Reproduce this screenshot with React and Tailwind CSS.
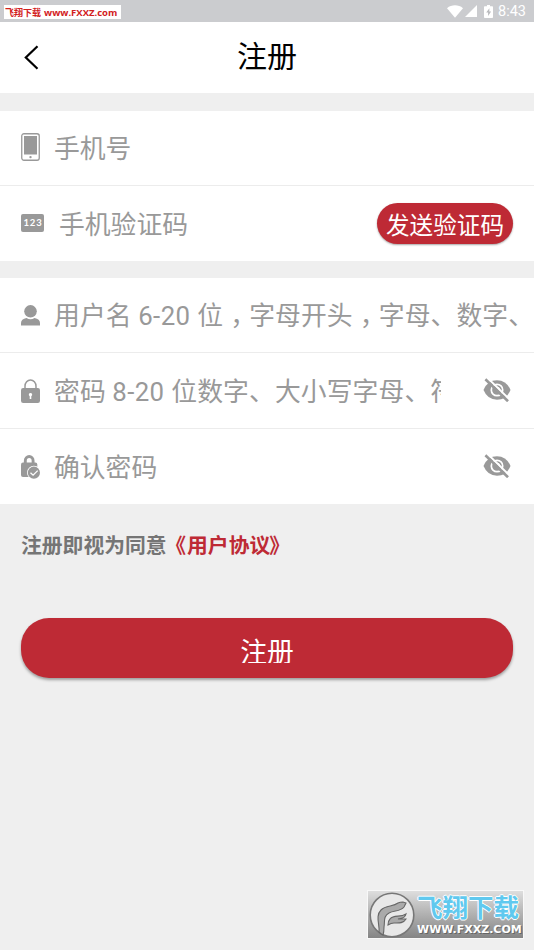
import React from "react";

function StatusBar() {
  return (
    <div className="flex h-[22px] items-start justify-between bg-[#cbcccf]">
      <div className="ml-1 mt-[5px] flex h-[14px] w-[117px] items-center gap-[3px] whitespace-nowrap bg-white pl-px font-bold text-[#d2201d]">
        <span className="pt-px text-[9px] leading-[14px]">飞翔下载</span>
        <span className="pt-px font-['Open_Sans'] text-[9.5px] leading-[14px]">www.FXXZ.com</span>
      </div>
      <div className="flex h-[22px] items-center pr-2 text-white">
        <svg className="h-[13px] w-[16px]" viewBox="0 0 16 13" fill="currentColor">
          <path d="M0 3.2C4.5-.6 11.5-.6 16 3.2L8 12.8z" />
        </svg>
        <svg className="ml-[2px] h-[12px] w-[12px]" viewBox="0 0 12 12" fill="currentColor">
          <path d="M12 0v12H0z" />
        </svg>
        <svg className="ml-[7px] h-[13px] w-[9px]" viewBox="0 0 9 13">
          <path d="M3 0h3v1.3h2.2q.8 0 .8.8v10q0 .9-.8.9H.8Q0 13 0 12.100V2.100q0-.8.8-.8H3z" fill="#fff" />
          <path d="M5.400 3.200 2.200 7.600h1.900v3.300l3-4.500H5.300z" fill="#b9babd" />
        </svg>
        <span className="ml-[5px] pt-[2px] font-[Roboto] text-[14.500px] leading-[20px] text-white">8:43</span>
      </div>
    </div>
  );
}

function PhoneIcon() {
  return (
    <svg className="-mt-[2px] h-[28px] w-[19px]" viewBox="0 0 19 28">
      <rect x=".75" y=".75" width="17.500" height="26.500" rx="2.200" fill="#fff" stroke="#999" strokeWidth="1.300" />
      <rect x="3" y="3" width="13" height="18.500" fill="#999" />
      <circle cx="9.500" cy="24.100" r="1.200" fill="#999" />
    </svg>
  );
}

function CodeIcon() {
  return (
    <span className="-mt-px flex h-[18px] w-[23px] items-center justify-center rounded-[2px] bg-[#999] pl-px font-[Lato] text-[9.500px] font-bold tracking-[0.900px] text-white">
      123
    </span>
  );
}

function UserIcon() {
  return (
    <svg className="h-[21px] w-[19px]" viewBox="0 0 19 21" fill="#999">
      <ellipse cx="9.500" cy="6.300" rx="6.300" ry="6.200" />
      <path d="M0 20.500v-2.500Q0 14 5.500 13q4 2.600 8 0Q19 14 19 18v2.500z" />
    </svg>
  );
}

function LockIcon() {
  return (
    <svg className="h-[24px] w-[19px]" viewBox="0 0 19 24">
      <path d="M4 10V7.200a5.500 6.300 0 0 1 11 0V10" fill="none" stroke="#999" strokeWidth="1.500" />
      <rect x="0" y="9" width="19" height="15" rx="2.200" fill="#999" />
      <path d="M9.500 14a1.700 1.700 0 0 1 .8 3.200V20H8.700v-2.800A1.700 1.700 0 0 1 9.500 14" fill="#fff" />
    </svg>
  );
}

function LockCheckIcon() {
  return (
    <svg className="h-[24px] w-[19px]" viewBox="0 0 19 24">
      <path d="M4.300 11V5.700a3.900 4.200 0 0 1 7.800 0V11" fill="none" stroke="#999" strokeWidth="2.900" />
      <rect x="0" y="7.500" width="16.300" height="14.500" rx="2" fill="#999" />
      <circle cx="12.900" cy="17.700" r="6.900" fill="#fff" />
      <circle cx="12.900" cy="17.700" r="6.100" fill="#999" />
      <path d="m9.500 17.700 2.600 2.500 4.600-4.600" fill="none" stroke="#fff" strokeWidth="1.300" />
    </svg>
  );
}

function EyeOffIcon() {
  return (
    <svg className="mb-px mr-[23px] h-[24px] w-[28px] shrink-0" viewBox="0 0 28 24">
      <path d="M.5 12Q4.500 2.300 14 2.300T27.500 12Q23.500 21.700 14 21.700T.5 12" fill="#999" />
      <circle cx="14" cy="12" r="5.700" fill="none" stroke="#fff" strokeWidth="1.700" />
      <path d="M14 9.300q2.700.2 2.700 3" fill="none" stroke="#fff" strokeWidth="1.100" />
      <path d="M4.600 0 27.300 22.300" stroke="#fff" strokeWidth="2" />
      <path d="M2.400 1.300 25 23.300" stroke="#999" strokeWidth="2.600" />
    </svg>
  );
}

function Comma() {
  return <span className="inline-block w-[26px] pl-[7px] [font-feature-settings:'halt']">，</span>;
}

function Row({ icon, children, trailing, className = "", textClass = "ml-[14px]" }) {
  return (
    <div className={`flex items-center bg-white pl-[21px] ${className}`}>
      <span className="flex shrink-0 items-center">{icon}</span>
      <div className={`overflow-hidden whitespace-nowrap pt-[2px] text-[25.800px] leading-[38px] text-[#999] ${textClass}`}>
        {children}
      </div>
      {trailing && <div className="ml-auto flex items-center">{trailing}</div>}
    </div>
  );
}

function Watermark() {
  return (
    <div className="mb-[11px] ml-auto mr-[10px] mt-auto flex h-[49px] w-[157px] items-center border border-[#f8f8f8] bg-linear-to-b from-[#dedede] to-[#858585]">
      <svg className="ml-[1px] h-[46px] w-[46px] shrink-0" viewBox="0 0 46 46">
        <circle cx="23" cy="23" r="21.800" fill="#e8e8e8" stroke="#777" strokeWidth="1.600" />
        <path d="M10 40C11 33 6 24 12 18c5-5 12-3 17-7 2-1 3-1 5-1l3 1-2 4c-4 5-10 3-15 6-6 3-4 9-5 14q0 5-1 8-2-1-4-3z" fill="#aaa" stroke="#666" strokeWidth="1.100" />
        <path d="M21 27c4-5 10-1 16-5-1 5-5 4-8 5l8 0c-3 5-8 4-12 4q-3 0-6 2 0-4 2-6z" fill="#aaa" stroke="#666" strokeWidth="1.100" />
      </svg>
      <div className="ml-[2px] flex flex-col whitespace-nowrap font-bold">
        <span className="text-[25.5px] leading-[30px] text-[#60c9ef] [text-shadow:1px_0_#fff,-1px_0_#fff,0_1px_#fff,0_-1px_#fff]">飞翔下载</span>
        <span className="font-['DejaVu_Sans'] text-[11px] leading-[13px] text-white [text-shadow:1px_1px_#666]">WWW.FXXZ.COM</span>
      </div>
    </div>
  );
}

export default function App() {
  return (
    <div className="flex h-[950px] w-[534px] flex-col overflow-hidden bg-[#efefef] font-[Roboto,'Noto_Sans_CJK_SC',sans-serif]">
      <StatusBar />
      <header className="grid h-[71px] grid-cols-[1fr_auto_1fr] items-center bg-white">
        <svg className="ml-[24px] h-[25px] w-[15px]" viewBox="0 0 15 25" fill="none" stroke="#000" strokeWidth="2.200">
          <path d="M13.500 1.200 1.800 12.500l11.700 11.300" />
        </svg>
        <h1 className="pb-[2px] text-[30px] leading-[40px] text-black">注册</h1>
      </header>

      <section className="mt-[18px]">
        <Row className="h-[75px] border-b border-[#ececec]" icon={<PhoneIcon />}>手机号</Row>
        <Row
          className="h-[75px]"
          icon={<CodeIcon />}
          textClass="ml-[15px]"
          trailing={
            <button className="mr-[21px] h-[41px] w-[136px] whitespace-nowrap rounded-full bg-[#be2a35] pt-[5px] text-[23.600px] leading-[36px] text-white shadow-[0_1px_2px_rgba(0,0,0,0.35)]">
              发送验证码
            </button>
          }
        >
          手机验证码
        </Row>
      </section>

      <section className="mt-[17px]">
        <Row className="h-[75px] border-b border-[#ececec]" icon={<UserIcon />} textClass="ml-[14px] w-[485px] tracking-[0.1px]">
          用户名 <span className="tracking-[0.4px]">6-20 </span>位<Comma />字母开头<Comma />字母、数字、
        </Row>
        <Row
          className="h-[76px] border-b border-[#ececec]"
          icon={<LockIcon />}
          textClass="ml-[14px] w-[387px] tracking-[0.1px]"
          trailing={<EyeOffIcon />}
        >
          密码 <span className="tracking-[0.4px]">8-20 </span>位数字、大小写字母、符
        </Row>
        <Row className="h-[75px]" icon={<LockCheckIcon />} trailing={<EyeOffIcon />}>
          确认密码
        </Row>
      </section>

      <p className="ml-[21px] mt-[27px] flex whitespace-nowrap text-[20.800px] font-bold leading-[30px] text-[#757575]">
        <span>注册即视为同意</span>
        <span className="ml-[9px] flex text-[#be2a35]">
          <span className="w-[11.5px] [font-feature-settings:'halt']">《</span>
          <span>用户协议</span>
          <span className="-ml-px [font-feature-settings:'halt']">》</span>
        </span>
      </p>

      <button className="mx-[21px] mt-[57px] flex h-[60px] shrink-0 justify-center rounded-[28px] bg-[#be2a35] text-white shadow-[0_2px_3px_rgba(0,0,0,0.35)]">
        <span className="mt-[15px] block h-[30px] overflow-hidden pt-px text-[26.800px] leading-[39px]">注册</span>
      </button>
      <Watermark />
    </div>
  );
}
